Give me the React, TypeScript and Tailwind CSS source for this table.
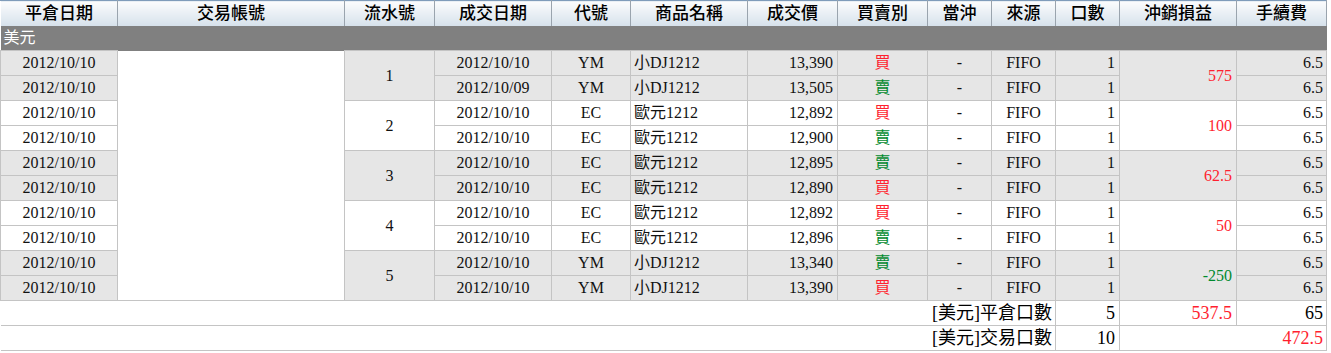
import React from 'react'

const RED = 'text-[#ff1f2f]'
const GREEN = 'text-[#008a2e]'

const cols = [117, 227, 90, 117, 79, 117, 90, 90, 64, 64, 64, 117, 90]
const headers = ['平倉日期', '交易帳號', '流水號', '成交日期', '代號', '商品名稱', '成交價', '買賣別', '當沖', '來源', '口數', '沖銷損益', '手續費']

type Trade = { close: string; date: string; code: string; name: string; price: string; side: '買' | '賣' }

const groups: { no: number; pl: string; loss?: boolean; rows: Trade[] }[] = [
  {
    no: 1,
    pl: '575',
    rows: [
      { close: '2012/10/10', date: '2012/10/10', code: 'YM', name: '小DJ1212', price: '13,390', side: '買' },
      { close: '2012/10/10', date: '2012/10/09', code: 'YM', name: '小DJ1212', price: '13,505', side: '賣' },
    ],
  },
  {
    no: 2,
    pl: '100',
    rows: [
      { close: '2012/10/10', date: '2012/10/10', code: 'EC', name: '歐元1212', price: '12,892', side: '買' },
      { close: '2012/10/10', date: '2012/10/10', code: 'EC', name: '歐元1212', price: '12,900', side: '賣' },
    ],
  },
  {
    no: 3,
    pl: '62.5',
    rows: [
      { close: '2012/10/10', date: '2012/10/10', code: 'EC', name: '歐元1212', price: '12,895', side: '賣' },
      { close: '2012/10/10', date: '2012/10/10', code: 'EC', name: '歐元1212', price: '12,890', side: '買' },
    ],
  },
  {
    no: 4,
    pl: '50',
    rows: [
      { close: '2012/10/10', date: '2012/10/10', code: 'EC', name: '歐元1212', price: '12,892', side: '買' },
      { close: '2012/10/10', date: '2012/10/10', code: 'EC', name: '歐元1212', price: '12,896', side: '賣' },
    ],
  },
  {
    no: 5,
    pl: '-250',
    loss: true,
    rows: [
      { close: '2012/10/10', date: '2012/10/10', code: 'YM', name: '小DJ1212', price: '13,340', side: '賣' },
      { close: '2012/10/10', date: '2012/10/10', code: 'YM', name: '小DJ1212', price: '13,390', side: '買' },
    ],
  },
]

const td = 'border border-[#c4c4c4] p-0 leading-none'

export default function App() {
  return (
    <div className="min-h-[353px] w-[1331px] bg-white text-[16px] text-[#111]" style={{ fontFamily: '"Liberation Serif", "Noto Sans CJK TC", serif' }}>
      <table className="w-[1326px] table-fixed border-collapse">
        <colgroup>
          {cols.map((w, i) => (
            <col key={i} style={{ width: w }} />
          ))}
        </colgroup>
        <thead>
          <tr className="h-[25px]">
            {headers.map((h) => (
              <th
                key={h}
                className="border-t border-t-[#7f9cba] border-r border-r-[#9aa4ae] border-l border-l-white bg-gradient-to-b from-[#fbfcfd] to-[#d6e1eb] p-0 text-center text-[17px] font-medium text-black leading-none"
              >
                {h}
              </th>
            ))}
          </tr>
        </thead>
        <tbody>
          {/* currency group */}
          <tr className="h-[25px]">
            <td colSpan={13} className="bg-[#808080] pl-[3px] text-left text-white leading-none">
              美元
            </td>
          </tr>

          {groups.map((g, gi) => {
            const bg = gi % 2 === 0 ? 'bg-[#e6e6e6]' : 'bg-white'
            return g.rows.map((r, ri) => (
              <tr key={`${g.no}-${ri}`} className={`h-[25px] ${bg}`}>
                <td className={`${td} text-center`}>{r.close}</td>
                {gi === 0 && ri === 0 && <td rowSpan={10} className="border-0 bg-white p-0" />}
                {ri === 0 && (
                  <td rowSpan={2} className={`${td} text-center`}>
                    {g.no}
                  </td>
                )}
                <td className={`${td} text-center`}>{r.date}</td>
                <td className={`${td} text-center`}>{r.code}</td>
                <td className={`${td} pl-[3px] text-left`}>{r.name}</td>
                <td className={`${td} pr-[4px] text-right`}>{r.price}</td>
                <td className={`${td} text-center ${r.side === '買' ? RED : GREEN}`}>{r.side}</td>
                <td className={`${td} text-center`}>-</td>
                <td className={`${td} text-center`}>FIFO</td>
                <td className={`${td} pr-[4px] text-right`}>1</td>
                {ri === 0 && (
                  <td rowSpan={2} className={`${td} pr-[4px] text-right ${g.loss ? GREEN : RED}`}>
                    {g.pl}
                  </td>
                )}
                <td className={`${td} pr-[3px] text-right`}>6.5</td>
              </tr>
            ))
          })}

          {/* totals */}
          <tr className="h-[25px] bg-white text-[18px] text-black">
            <td colSpan={10} className={`${td} border-l-0 pr-[3px] text-right`}>
              [美元]平倉口數
            </td>
            <td className={`${td} pr-[4px] text-right`}>5</td>
            <td className={`${td} pr-[4px] text-right ${RED}`}>537.5</td>
            <td className={`${td} pr-[3px] text-right`}>65</td>
          </tr>
          <tr className="h-[25px] bg-white text-[18px] text-black">
            <td colSpan={10} className={`${td} border-l-0 pr-[3px] text-right`}>
              [美元]交易口數
            </td>
            <td className={`${td} pr-[4px] text-right`}>10</td>
            <td colSpan={2} className={`${td} pr-[3px] text-right ${RED}`}>
              472.5
            </td>
          </tr>
        </tbody>
      </table>
    </div>
  )
}
